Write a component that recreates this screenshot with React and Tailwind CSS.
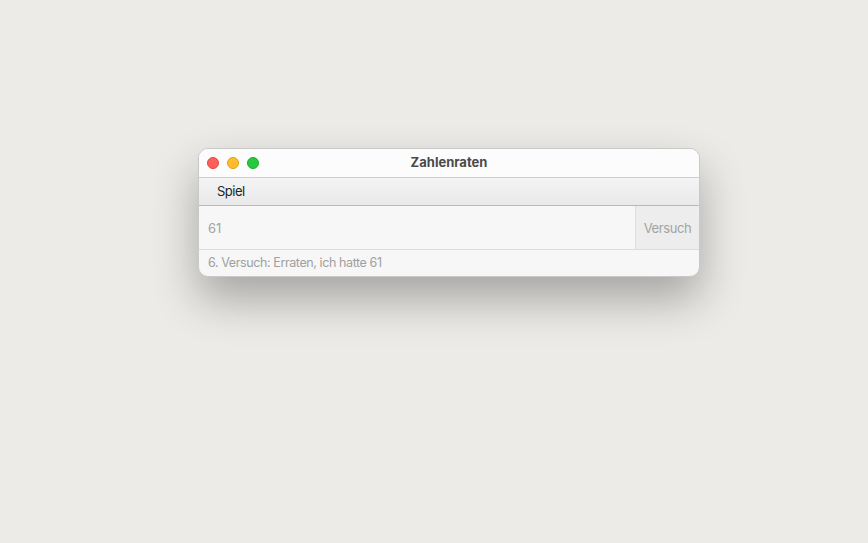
export default function App() {
  return (
    <div className="w-[868px] h-[543px] bg-[#edebe8] pt-[148px] pl-[198px]" style={{ fontFamily: 'Inter, "Noto Sans", sans-serif' }}>
      <div className="w-[502px] rounded-[10px] border border-[#c9c9c9] bg-[#f7f7f7] shadow-[0_22px_45px_rgba(0,0,0,0.3)] overflow-hidden">
        <div className="relative h-[29px] bg-[#fcfcfc] border-b border-[#cfcfcf] flex items-center">
          <div className="flex gap-[8px] pl-[8px]">
            <div className="w-[12px] h-[12px] rounded-full bg-[#fe5f57] border border-[#e2463f]" />
            <div className="w-[12px] h-[12px] rounded-full bg-[#febc2e] border border-[#e1a116]" />
            <div className="w-[12px] h-[12px] rounded-full bg-[#28c840] border border-[#14ae2a]" />
          </div>
          <div className="absolute inset-0 flex items-center justify-center text-[13px] font-bold text-[#4a4a4a]">Zahlenraten</div>
        </div>
        <div className="h-[28px] bg-gradient-to-b from-[#f4f4f4] to-[#e9e9e9] border-b border-[#b8b8b8] flex items-center pl-[18px] text-[13px] tracking-[-0.5px] text-[#222]">
          Spiel
        </div>
        <div className="flex h-[44px] border-b border-[#dcdcdc]">
          <div className="flex-1 bg-[#f7f7f7] border-r border-[#dedede] flex items-center pl-[9px] pt-[2px] text-[13px] text-[#a3a3a3]">61</div>
          <div className="w-[63px] bg-[#ededed] flex items-center justify-center pt-[2px] text-[13px] tracking-[-0.4px] text-[#a3a3a3]">Versuch</div>
        </div>
        <div className="h-[26px] flex items-center pl-[9px] pt-[1px] text-[12.5px] tracking-[-0.4px] text-[#a0a0a0]">6. Versuch: Erraten, ich hatte 61</div>
      </div>
    </div>
  );
}
